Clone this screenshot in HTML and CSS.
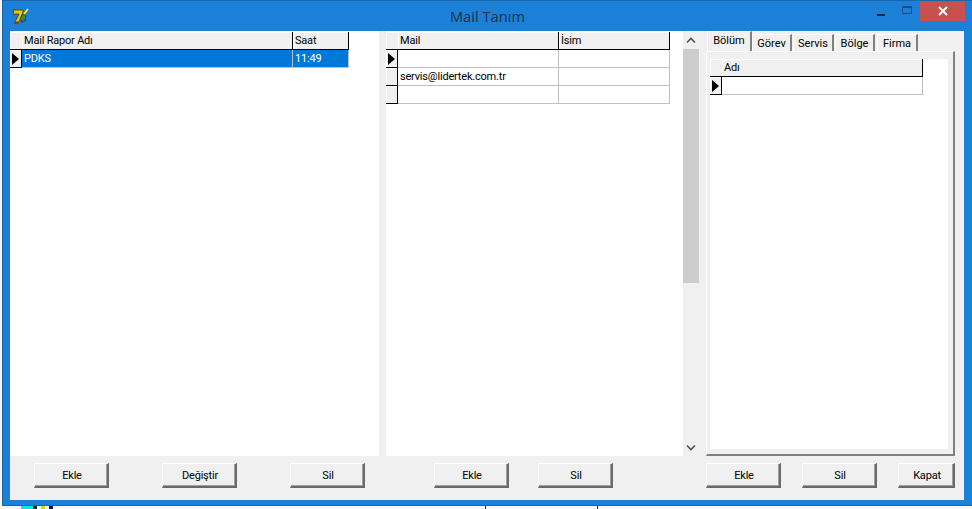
FILE: index.html
```html
<!DOCTYPE html>
<html lang="tr">
<head>
<meta charset="utf-8">
<title>Mail Tanım</title>
<link rel="stylesheet" href="styles.css">
</head>
<body>
<div class="window">
  <header class="titlebar">
    <div class="title-left">
      <svg class="app-icon" width="18" height="18" viewBox="0 0 18 18">
        <path d="M1 3h10v2L7 15H3l4-8H3L2 8z" fill="#e8c810" stroke="#5a4a00" stroke-width="1"/>
        <path d="M2 16h5" stroke="#a03010" stroke-width="1.5"/>
        <path d="M8 12l3-5 3 2-1 5h-3z" fill="#3c8a4a" stroke="#333" stroke-width=".7"/>
        <path d="M12 7l4-5" stroke="#f4f000" stroke-width="2"/>
        <path d="M9 15h2M13 13h1" stroke="#202070" stroke-width="1"/>
      </svg>
    </div>
    <div class="title-text">Mail Tanım</div>
    <div class="controls">
      <span class="ctl"><i class="min"></i></span>
      <span class="ctl"><i class="max"></i></span>
      <span class="close">
        <svg width="10" height="10" viewBox="0 0 10 10"><path d="M1 1l8 8M9 1l-8 8" stroke="#fff" stroke-width="2"/></svg>
      </span>
    </div>
  </header>
  <div class="client">
    <div class="main">
      <section class="pane pane-left">
        <div class="row cols-rapor">
          <div class="ind head"></div><div class="hcell">Mail Rapor Adı</div><div class="hcell">Saat</div>
        </div>
        <div class="row cols-rapor selected">
          <div class="ind"><i class="ptr"></i></div><div class="cell">PDKS</div><div class="cell">11:49</div>
        </div>
      </section>
      <section class="pane pane-mid">
        <div class="row cols-mail">
          <div class="ind head"></div><div class="hcell">Mail</div><div class="hcell">İsim</div>
        </div>
        <div class="row cols-mail">
          <div class="ind"><i class="ptr"></i></div><div class="cell"></div><div class="cell"></div>
        </div>
        <div class="row cols-mail">
          <div class="ind"></div><div class="cell">servis@lidertek.com.tr</div><div class="cell"></div>
        </div>
        <div class="row cols-mail">
          <div class="ind"></div><div class="cell"></div><div class="cell"></div>
        </div>
      </section>
      <div class="scrollbar">
        <div class="arrow">
          <svg width="10" height="7" viewBox="0 0 10 7"><path d="M1 5.5l4-4 4 4" fill="none" stroke="#505050" stroke-width="1.6"/></svg>
        </div>
        <div class="thumb"></div>
        <div class="track"></div>
        <div class="arrow">
          <svg width="10" height="7" viewBox="0 0 10 7"><path d="M1 1.5l4 4 4-4" fill="none" stroke="#505050" stroke-width="1.6"/></svg>
        </div>
      </div>
      <section class="tabs">
        <nav class="tabstrip">
          <span class="tab active">Bölüm</span>
          <span class="tab t-gorev">Görev</span>
          <span class="tab t-servis">Servis</span>
          <span class="tab t-bolge">Bölge</span>
          <span class="tab t-firma">Firma</span>
        </nav>
        <div class="tabpanel">
          <div class="tabinner">
            <div class="row cols-adi">
              <div class="ind head"></div><div class="hcell">Adı</div>
            </div>
            <div class="row cols-adi">
              <div class="ind"><i class="ptr"></i></div><div class="cell"></div>
            </div>
          </div>
        </div>
      </section>
    </div>
    <footer class="footer">
      <div class="group g-left"><button class="btn">Ekle</button><button class="btn">Değiştir</button><button class="btn">Sil</button></div>
      <div class="group g-mid"><button class="btn">Ekle</button><button class="btn">Sil</button></div>
      <div class="group g-right"><button class="btn">Ekle</button><button class="btn">Sil</button><button class="btn btn-small">Kapat</button></div>
    </footer>
  </div>
</div>
<div class="desktop">
  <i class="frag f-cyan"></i><i class="frag f-dark"></i><i class="frag f-tick1"></i><i class="frag f-tick2"></i>
</div>
</body>
</html>
```
FILE: styles.css
```css
* { box-sizing: border-box; }
html, body { margin: 0; padding: 0; }
body {
  width: 972px;
  height: 509px;
  overflow: hidden;
  background: #f4f6f8;
  font-family: Roboto, "Liberation Sans", Arial, sans-serif;
  font-size: 11px;
  color: #000;
}
.window {
  margin-left: 2px;
  width: 970px;
  height: 506px;
  background: #1a80d8;
  border-left: 1px solid #1a65a8;
  border-top: 1px solid #1a65a8;
  border-bottom: 1px solid #1a65a8;
  padding: 0 8px 5px 7px;
  display: flex;
  flex-direction: column;
}
.titlebar {
  height: 30px;
  flex: none;
  display: grid;
  grid-template-columns: 1fr auto 1fr;
  margin: 0 -8px 0 -7px;
}
.title-left { padding: 6px 0 0 9px; }
.app-icon { display: block; }
.title-text {
  font-family: "Open Sans", sans-serif;
  font-size: 14.7px;
  line-height: 30px;
  color: #1c3148;
}
.controls { display: flex; justify-content: flex-end; align-items: flex-start; padding-right: 7px; }
.ctl { width: 26px; height: 20px; display: flex; align-items: center; justify-content: center; }
.min { width: 8px; height: 2px; background: #222; margin-top: 8px; }
.max { width: 10px; height: 8px; border: 1px solid #1c4f80; border-top-width: 2px; margin-top: -2px; }
.close {
  width: 45px;
  height: 20px;
  background: #c75050;
  display: flex;
  align-items: center;
  justify-content: center;
}
.client {
  flex: 1;
  background: #f0f0f0;
  display: flex;
  flex-direction: column;
}
.main { display: flex; height: 425px; flex: none; }
.pane { background: #fff; padding-top: 1px; }
.pane-left { width: 369px; margin-right: 7px; }
.pane-mid { width: 297px; }
.row { display: grid; height: 18px; letter-spacing: -0.2px; }
.cols-rapor { grid-template-columns: 12px 271px 56px; }
.cols-mail { grid-template-columns: 12px 161px 111px; }
.cols-adi { grid-template-columns: 12px 201px; }
.ind {
  background: #f0f0f0;
  border-right: 1px solid #000;
  border-bottom: 1px solid #000;
  box-shadow: inset 1px 1px 0 #fff;
  display: flex;
  align-items: center;
  padding-left: 2px;
}
.ind.head { border-right: 0; border-bottom: 1px solid #000; }
.hcell {
  background: #f0f0f0;
  border-right: 1px solid #000;
  border-bottom: 1px solid #000;
  box-shadow: inset 1px 1px 0 #fff;
  padding-left: 2px;
  line-height: 17px;
  white-space: nowrap;
}
.cell {
  border-right: 1px solid #c0c0c0;
  border-bottom: 1px solid #c0c0c0;
  padding-left: 2px;
  line-height: 17px;
  white-space: nowrap;
}
.selected .cell { background: #0078d7; color: #fff; }
.ptr {
  display: block;
  width: 0;
  height: 0;
  border-left: 7px solid #000;
  border-top: 6px solid transparent;
  border-bottom: 6px solid transparent;
}
.scrollbar {
  width: 16px;
  display: flex;
  flex-direction: column;
  margin-right: 7px;
}
.arrow { height: 18px; display: flex; align-items: center; justify-content: center; flex: none; }
.thumb { height: 234px; background: #cdcdcd; flex: none; }
.track { flex: 1; }
.tabs { width: 249px; display: flex; flex-direction: column; }
.tabstrip { height: 20px; display: flex; align-items: flex-end; padding-left: 1px; flex: none; position: relative; z-index: 1; }
.tab {
  height: 17px;
  background: #f0f0f0;
  border: 1px solid #fff;
  border-bottom: 0;
  border-right: 2px solid #808080;
  text-align: center;
  line-height: 17px;
  white-space: nowrap;
}
.tab.active { width: 45px; height: 20px; line-height: 17px; border-bottom: 0; }
.t-gorev { width: 40px; margin-right: 1px; }
.t-servis { width: 41px; margin-right: 1px; }
.t-bolge { width: 40px; margin-right: 2px; }
.t-firma { width: 41px; }
.tabpanel {
  flex: 1;
  background: #f0f0f0;
  border: 1px solid #fff;
  border-right: 2px solid #808080;
  border-bottom: 2px solid #808080;
  padding: 7px 5px 5px 3px;
}
.tabinner { background: #fff; height: 100%; }
.footer { display: flex; flex: 1; padding-top: 7px; }
.group { display: flex; align-items: flex-start; }
.g-left { width: 376px; padding-left: 24px; gap: 53px; }
.g-mid { width: 320px; padding-left: 48px; gap: 29px; }
.g-right { gap: 21px; }
.btn {
  width: 75px;
  height: 25px;
  padding: 1px 0 0 2px;
  background: #f0f0f0;
  font: inherit;
  letter-spacing: -0.2px;
  color: #000;
  border: 1px solid #fff;
  border-right: 2px solid #696969;
  border-bottom: 2px solid #696969;
  box-shadow: inset -1px -1px 0 #a0a0a0;
  border-radius: 0;
}
.btn-small { width: 57px; }
.desktop { height: 3px; display: flex; position: relative; }
.frag { display: block; height: 3px; flex: none; }
.f-cyan { width: 12px; margin-left: 21px; background: #00e8f0; }
.f-dark { width: 20px; background: linear-gradient(90deg, #222 0 4px, #fff 4px 8px, #e0e000 8px 12px, #fff 12px 16px, #101060 16px); }
.f-tick1 { width: 1px; margin-left: 432px; background: #333; }
.f-tick2 { width: 1px; margin-left: 111px; background: #333; }
```
